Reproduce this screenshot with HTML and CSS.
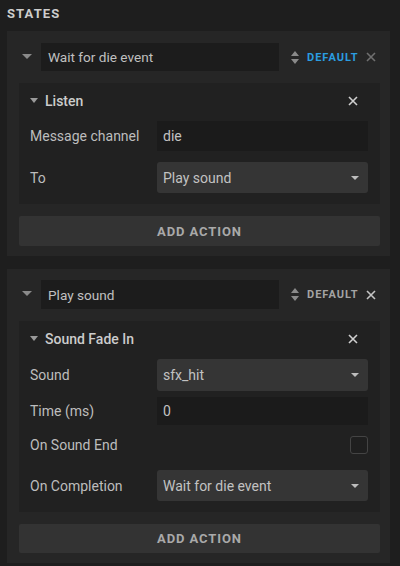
FILE: index.html
```html
<!DOCTYPE html>
<html>
<head>
<meta charset="utf-8">
<link rel="stylesheet" href="styles.css">
</head>
<body>
<div class="title">STATES</div>

<div class="state">
  <div class="state-head">
    <span class="tri tri-big"></span>
    <div class="name-input">Wait for die event</div>
    <svg class="sort" width="8" height="13" viewBox="0 0 8 13"><path d="M4 0L8 5H0Z M0 8H8L4 13Z" fill="#8a8a8a"/></svg>
    <span class="default active">DEFAULT</span>
    <svg class="close dim" width="10" height="10" viewBox="0 0 10 10"><path d="M1 1L9 9M9 1L1 9" stroke="#707070" stroke-width="1.6"/></svg>
  </div>
  <div class="action">
    <div class="action-head">
      <span class="tri"></span>
      <span class="action-title">Listen</span>
      <svg class="close inner" width="10" height="10" viewBox="0 0 10 10"><path d="M1 1L9 9M9 1L1 9" stroke="#cfcfcf" stroke-width="1.6"/></svg>
    </div>
    <div class="row">
      <span class="label">Message channel</span>
      <div class="field input h30">die</div>
    </div>
    <div class="row mt11">
      <span class="label">To</span>
      <div class="field select h31">Play sound<span class="caret"></span></div>
    </div>
  </div>
  <div class="add">ADD ACTION</div>
</div>

<div class="state s2">
  <div class="state-head">
    <span class="tri tri-big"></span>
    <div class="name-input h29">Play sound</div>
    <svg class="sort" width="8" height="13" viewBox="0 0 8 13"><path d="M4 0L8 5H0Z M0 8H8L4 13Z" fill="#8a8a8a"/></svg>
    <span class="default">DEFAULT</span>
    <svg class="close" width="10" height="10" viewBox="0 0 10 10"><path d="M1 1L9 9M9 1L1 9" stroke="#c4c4c4" stroke-width="1.6"/></svg>
  </div>
  <div class="action">
    <div class="action-head">
      <span class="tri"></span>
      <span class="action-title">Sound Fade In</span>
      <svg class="close inner" width="10" height="10" viewBox="0 0 10 10"><path d="M1 1L9 9M9 1L1 9" stroke="#cfcfcf" stroke-width="1.6"/></svg>
    </div>
    <div class="row">
      <span class="label">Sound</span>
      <div class="field select h32">sfx_hit<span class="caret"></span></div>
    </div>
    <div class="row mt6">
      <span class="label">Time (ms)</span>
      <div class="field input h28">0</div>
    </div>
    <div class="row mt6 h28row">
      <span class="label">On Sound End</span>
      <span class="check"></span>
    </div>
    <div class="row mt11">
      <span class="label">On Completion</span>
      <div class="field select h31">Wait for die event<span class="caret"></span></div>
    </div>
  </div>
  <div class="add h29">ADD ACTION</div>
</div>
</body>
</html>
```

FILE: styles.css
```css
* { box-sizing: border-box; }
html, body { margin: 0; padding: 0; }
body {
  background: #1e1e1e;
  font-family: Roboto, "Noto Sans", sans-serif;
  color: #bcbcbc;
  width: 400px;
  height: 566px;
  overflow: hidden;
}
.title {
  font-size: 13px;
  font-weight: 700;
  color: #cdcdcd;
  padding: 6px 0 0 7px;
  height: 31px;
  letter-spacing: 1.1px;
}
.state {
  background: #262626;
  margin: 0 10px 13px 7px;
  padding: 12px 10px 10px 12px;
}
.state.s2 { padding-top: 11px; }
.state-head {
  display: flex;
  align-items: center;
  height: 28px;
}
.s2 .state-head { height: 29px; }
.tri {
  width: 0; height: 0;
  border-left: 4px solid transparent;
  border-right: 4px solid transparent;
  border-top: 5px solid #9a9a9a;
  display: inline-block;
}
.tri-big {
  border-left-width: 5px;
  border-right-width: 5px;
  border-top-width: 5px;
  margin: 0 9px 2px 3px;
  border-top-color: #8a8a8a;
}
.name-input {
  width: 238px;
  height: 28px;
  background: #1c1c1c;
  font-size: 13.6px;
  color: #c0c0c0;
  display: flex;
  align-items: center;
  padding-left: 7px;
}
.name-input.h29 { height: 29px; }
.sort { margin-left: 12px; }
.default {
  font-size: 11px;
  font-weight: 700;
  letter-spacing: 1px;
  color: #a4a4a4;
  margin-left: 8px;
}
.default.active { color: #2b9de0; }
.close { margin-left: 8px; }
.action {
  background: #212121;
  margin-top: 12px;
  padding: 0 12px 11px 11px;
}
.action-head {
  display: flex;
  align-items: center;
  height: 38px;
  padding-bottom: 2px;
}
.action-head .tri { margin: 0 7px 2px 0; }
.action-title {
  font-size: 14px;
  font-weight: 500;
  color: #cccccc;
}
.close.inner { margin-left: auto; margin-right: 10px; }
.row {
  display: flex;
  align-items: center;
  justify-content: space-between;
}
.mt6 { margin-top: 6px; }
.mt11 { margin-top: 11px; }
.h28row { height: 28px; }
.label {
  font-size: 14px;
  color: #bdbdbd;
}
.field {
  width: 211px;
  font-size: 14px;
  color: #c2c2c2;
  display: flex;
  align-items: center;
  padding-left: 6px;
  position: relative;
}
.input { background: #1b1b1b; }
.select { background: #353535; border-radius: 3px; }
.h28 { height: 28px; }
.h30 { height: 30px; }
.h31 { height: 31px; }
.h32 { height: 32px; }
.caret {
  margin-left: auto;
  margin-right: 9px;
  width: 0; height: 0;
  border-left: 4px solid transparent;
  border-right: 4px solid transparent;
  border-top: 4px solid #bdbdbd;
}
.check {
  width: 18px;
  height: 18px;
  border: 1px solid #444;
  border-radius: 3px;
  background: #1f1f1f;
}
.add {
  margin-top: 12px;
  height: 30px;
  background: #333333;
  border-radius: 2px;
  display: flex;
  align-items: center;
  justify-content: center;
  font-size: 13px;
  font-weight: 700;
  letter-spacing: 0.9px;
  color: #a9a9a9;
}
.add.h29 { height: 29px; }
```
